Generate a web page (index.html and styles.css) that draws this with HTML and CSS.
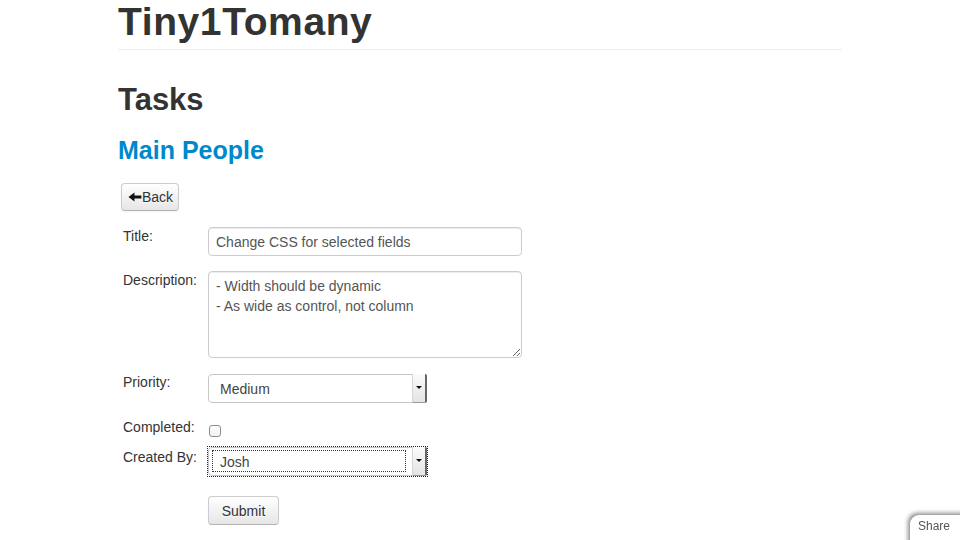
FILE: index.html
```html
<!DOCTYPE html>
<html lang="en">
<head>
	<meta charset="UTF-8">
	<title>Tiny1Tomany</title>
	<link rel="stylesheet" href="styles.css">
</head>
<body>
	<div class="container">
		<div class="page-header">
			<h1>Tiny1Tomany</h1>
		</div>

		<h2>Tasks</h2>
		<h3><a href="#">Main People</a></h3>

		<button class="btn back-btn" type="button">
			<svg class="icon-arrow" width="14" height="14" viewBox="0 0 14 14">
				<path d="M0.5 7 L6.5 2.5 V5.5 H13.5 V8.5 H6.5 V11.5 Z" fill="#111"/>
			</svg>Back
		</button>

		<form class="task-form">
			<div class="field">
				<label for="title">Title:</label>
				<input class="control title-input" id="title" type="text" value="Change CSS for selected fields">
			</div>
			<div class="field">
				<label for="description">Description:</label>
				<textarea class="control desc-input" id="description">- Width should be dynamic
- As wide as control, not column</textarea>
			</div>
			<div class="field">
				<label for="priority">Priority:</label>
				<div class="select-wrap priority-wrap">
					<select id="priority">
						<option>Low</option>
						<option selected>Medium</option>
						<option>High</option>
					</select>
					<span class="select-arrow"></span>
				</div>
			</div>
			<div class="field field-check">
				<label for="completed">Completed:</label>
				<input class="check" id="completed" type="checkbox">
			</div>
			<div class="field">
				<label for="created">Created By:</label>
				<div class="select-wrap focused">
					<select id="created">
						<option selected>Josh</option>
						<option>Ryan</option>
					</select>
					<span class="select-arrow"></span>
				</div>
			</div>
			<div class="actions">
				<button class="btn submit-btn" type="submit">Submit</button>
			</div>
		</form>
	</div>

	<div class="share-tab">Share</div>
</body>
</html>
```

FILE: styles.css
```css
body,
html {
	margin: 0;
	padding: 0;
}

html {
	overflow: hidden;
}

body {
	font-family: "Liberation Sans", Arial, sans-serif;
	font-size: 14px;
	line-height: 20px;
	color: #333;
	background: #fff;
}

*,
*::after,
*::before {
	box-sizing: border-box;
}

.container {
	width: 724px;
	margin: 0 auto;
}

h1,
h2,
h3 {
	margin: 0;
	font-weight: bold;
	line-height: 40px;
	color: #333;
}

.page-header {
	margin-top: 2px;
	padding-bottom: 7px;
	border-bottom: 1px solid #eee;
}

h1 {
	font-size: 39px;
	letter-spacing: 0.6px;
}

h2 {
	margin-top: 30px;
	margin-bottom: 10px;
	font-size: 31px;
}

h3 {
	font-size: 25px;
}

h3 a {
	color: #0088cc;
	text-decoration: none;
}

/* buttons */
.btn {
	display: inline-flex;
	align-items: center;
	justify-content: center;
	height: 29px;
	padding: 0 10px;
	font-family: inherit;
	font-size: 14px;
	color: #333;
	text-shadow: 0 1px 1px rgba(255, 255, 255, 0.75);
	background: linear-gradient(#ffffff, #e6e6e6);
	border: 1px solid #cccccc;
	border-bottom-color: #b3b3b3;
	border-radius: 4px;
	box-shadow: inset 0 1px 0 rgba(255, 255, 255, 0.2), 0 1px 2px rgba(0, 0, 0, 0.05);
	cursor: pointer;
}

.back-btn {
	margin: 13px 0 0 3px;
	width: 58px;
	height: 28px;
	padding: 0 5px 0 6px;
}

.icon-arrow {
	display: block;
}

.submit-btn {
	width: 71px;
}

/* form */
.task-form {
	margin: 15px 0 0 5px;
}

.field {
	display: flex;
	align-items: flex-start;
}

.field label {
	width: 85px;
	flex: none;
}

.control {
	font-family: inherit;
	font-size: 14px;
	line-height: 20px;
	color: #555;
	padding: 4px 7px;
	background: #fff;
	border: 1px solid #ccc;
	border-radius: 4px;
	box-shadow: inset 0 1px 1px rgba(0, 0, 0, 0.075);
	margin: 0;
}

.title-input {
	width: 314px;
	height: 29px;
	margin: 1px 0 14px;
}

.desc-input {
	width: 314px;
	height: 87px;
	margin: 1px 0 14px;
	resize: vertical;
}

.select-wrap {
	position: relative;
	width: 219px;
	height: 29px;
}

.priority-wrap {
	margin: 2px 0 14px;
}

.select-wrap select {
	appearance: none;
	-webkit-appearance: none;
	width: 100%;
	height: 100%;
	padding: 0 20px 0 11px;
	font-family: inherit;
	font-size: 14px;
	color: #444;
	background: #fff;
	border: 1px solid #c6c6c6;
	border-radius: 4px 2px 2px 4px;
	outline: none;
}

.select-arrow {
	position: absolute;
	top: 0;
	right: 0;
	bottom: 0;
	width: 15px;
	background: linear-gradient(#fbfbfb, #e4e4e4);
	border-left: 1px solid #d6d6d6;
	border-right: 2px solid #666;
	border-bottom: 1px solid #999;
	border-radius: 0 2px 2px 0;
	pointer-events: none;
}

.select-arrow::after {
	content: "";
	position: absolute;
	left: 3px;
	top: 12px;
	border-left: 3px solid transparent;
	border-right: 3px solid transparent;
	border-top: 3px solid #111;
}

.select-wrap.focused {
	outline: 1px dotted #222;
}

.select-wrap.focused::before {
	content: "";
	position: absolute;
	left: 4px;
	top: 3px;
	right: 21px;
	bottom: 4px;
	border: 1px dotted #333;
	pointer-events: none;
}

.field-check {
	margin-bottom: 10px;
}

.check {
	appearance: none;
	-webkit-appearance: none;
	width: 12px;
	height: 12px;
	margin: 8px 0 0 1px;
	background: linear-gradient(#fff, #f1f1f1);
	border: 1px solid #8d8d8d;
	border-radius: 3px;
}

.actions {
	margin: 20px 0 0 85px;
}

/* share tab in the corner */
.share-tab {
	position: fixed;
	left: 910px;
	top: 515px;
	width: 70px;
	height: 40px;
	padding: 4px 0 0 8px;
	font-size: 12px;
	line-height: 14px;
	color: #555;
	background: #fff;
	border-radius: 9px 0 0 0;
	box-shadow: -2px -2px 4px rgba(0, 0, 0, 0.45);
}
```
